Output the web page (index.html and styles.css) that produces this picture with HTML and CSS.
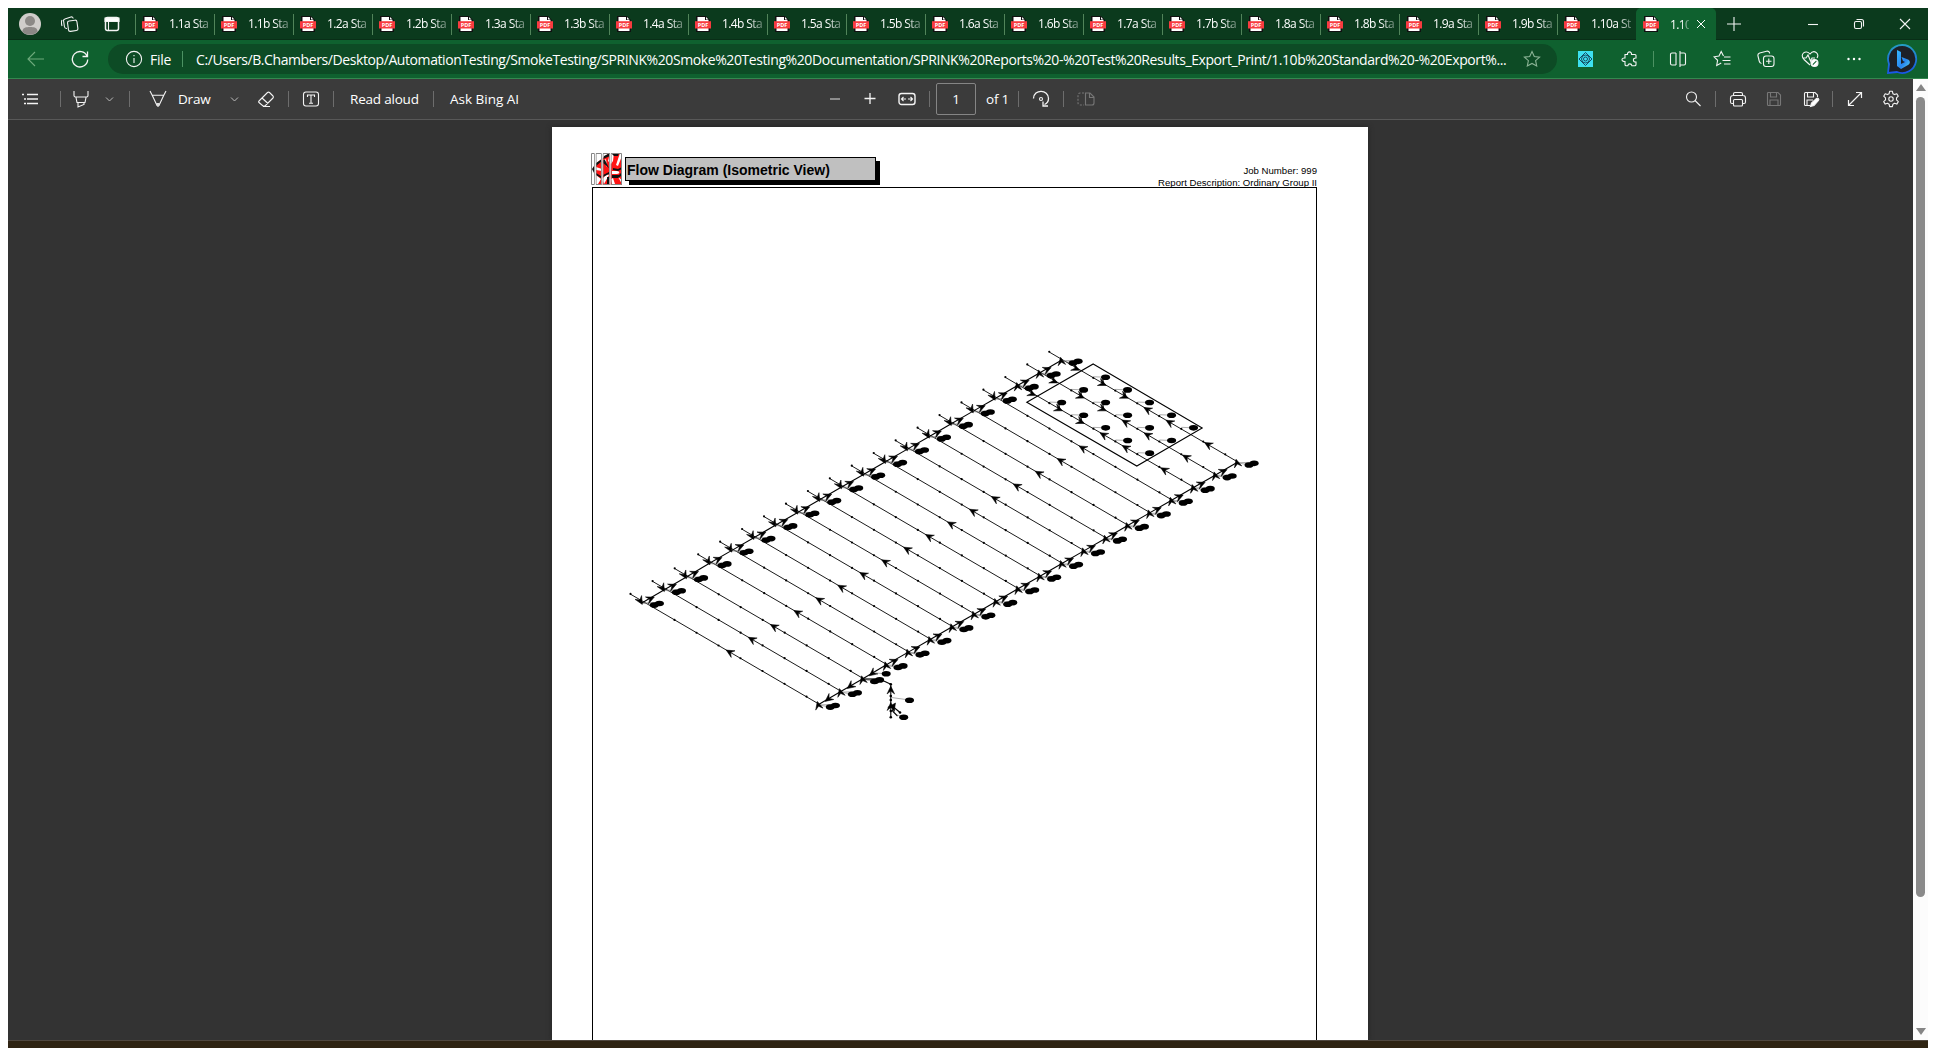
FILE: index.html
```html
<!DOCTYPE html>
<html lang="en">
<head>
<meta charset="utf-8">
<title>Flow Diagram</title>
<link rel="stylesheet" href="styles.css">
</head>
<body>
<svg width="0" height="0" class="defs">
  <symbol id="pdf" viewBox="0 0 16 16"><path d="M2 0h9l4 4v12H1V0z" fill="#111"/><path d="M2.5 1H10v3h3.5v11h-11z" fill="#fff"/><path d="M11 1l2.5 2.5H11z" fill="#fff"/><path d="M0 5.2h16v7.3H0z" fill="#f83b3f"/><text x="8" y="11" text-anchor="middle" class="pdf-text">PDF</text></symbol>
  <symbol id="chev" viewBox="0 0 9 9"><path d="M1 2.5l3.5 3.5L8 2.5"/></symbol>
</svg>
<div class="window">
  <header class="tabs">
    <div class="tab-tools">
      <svg class="avatar" viewBox="0 0 22 22"><circle cx="11" cy="11" r="11" fill="#cfccca"/><circle cx="11" cy="8" r="5" fill="#8b8886"/><path d="M3.2 18.5C4 14.500 7 14 11 14s7 .5 7.800 4.500A11 11 0 0 1 3.200 18.500z" fill="#8b8886"/></svg>
      <svg class="ic" viewBox="0 0 18 18"><rect x="7" y="5.500" width="9.500" height="10.500" rx="1.800" transform="rotate(-8 12 11)"/><path d="M6 13.500c-2 .2-2.400-.6-2.600-2L2.600 6c-.2-1 .3-1.700 1.300-2l6-2c1.300-.4 2 .2 2.300 1.500M1 11C.3 8.500.5 6 1 5"/></svg>
      <svg class="ic" viewBox="0 0 18 18"><rect x="2.500" y="2.500" width="13" height="13" rx="2" stroke-width="1.500"/><path d="M2 3h14v3.500H2z" fill="#fff"/><path d="M5.500 6v10"/></svg>
    </div>
    <div class="tab"><svg><use href="#pdf"/></svg><span>1.1a Sta</span></div>
    <div class="tab"><svg><use href="#pdf"/></svg><span>1.1b Sta</span></div>
    <div class="tab"><svg><use href="#pdf"/></svg><span>1.2a Sta</span></div>
    <div class="tab"><svg><use href="#pdf"/></svg><span>1.2b Sta</span></div>
    <div class="tab"><svg><use href="#pdf"/></svg><span>1.3a Sta</span></div>
    <div class="tab"><svg><use href="#pdf"/></svg><span>1.3b Sta</span></div>
    <div class="tab"><svg><use href="#pdf"/></svg><span>1.4a Sta</span></div>
    <div class="tab"><svg><use href="#pdf"/></svg><span>1.4b Sta</span></div>
    <div class="tab"><svg><use href="#pdf"/></svg><span>1.5a Sta</span></div>
    <div class="tab"><svg><use href="#pdf"/></svg><span>1.5b Sta</span></div>
    <div class="tab"><svg><use href="#pdf"/></svg><span>1.6a Sta</span></div>
    <div class="tab"><svg><use href="#pdf"/></svg><span>1.6b Sta</span></div>
    <div class="tab"><svg><use href="#pdf"/></svg><span>1.7a Sta</span></div>
    <div class="tab"><svg><use href="#pdf"/></svg><span>1.7b Sta</span></div>
    <div class="tab"><svg><use href="#pdf"/></svg><span>1.8a Sta</span></div>
    <div class="tab"><svg><use href="#pdf"/></svg><span>1.8b Sta</span></div>
    <div class="tab"><svg><use href="#pdf"/></svg><span>1.9a Sta</span></div>
    <div class="tab"><svg><use href="#pdf"/></svg><span>1.9b Sta</span></div>
    <div class="tab"><svg><use href="#pdf"/></svg><span>1.10a St</span></div>
    <div class="tab active"><svg><use href="#pdf"/></svg><span>1.10</span><svg class="close" viewBox="0 0 10 10"><path d="M1 1l8 8M9 1L1 9"/></svg></div>
    <svg class="ic new" viewBox="0 0 18 18"><path d="M9 2v14M2 9h14"/></svg>
    <div class="controls">
      <svg class="ic" viewBox="0 0 18 18"><path d="M4 9.500h10"/></svg>
      <svg class="ic" viewBox="0 0 18 18"><rect x="4.500" y="6.500" width="7" height="7" rx="1.500"/><path d="M6.500 4.500h5a2 2 0 0 1 2 2v5"/></svg>
      <svg class="ic" viewBox="0 0 18 18"><path d="M4 4l10 10M14 4L4 14"/></svg>
    </div>
  </header>

  <nav class="navbar">
    <svg class="ic back" viewBox="0 0 18 18"><path d="M18 9H2M9 2L2 9l7 7"/></svg>
    <svg class="ic" viewBox="0 0 18 18"><path d="M16 6A7.700 7.700 0 1 0 16.700 9.500M16.500 1.500v5h-5" stroke-width="1.300"/></svg>
    <div class="address">
      <svg class="ic" viewBox="0 0 18 18"><circle cx="9" cy="9" r="7.600"/><path d="M9 8v5M9 5v1.300"/></svg>
      <span class="file">File</span><i class="sep"></i>
      <span class="url">C:/Users/B.Chambers/Desktop/AutomationTesting/SmokeTesting/SPRINK%20Smoke%20Testing%20Documentation/SPRINK%20Reports%20-%20Test%20Results_Export_Print/1.10b%20Standard%20-%20Export%...</span>
      <svg class="ic star" viewBox="0 0 18 18"><path d="M9 1.500l2.300 5 5.300.600-4 3.600 1.100 5.300L9 13.400 4.300 16l1.100-5.300-4-3.600 5.300-.600z"/></svg>
    </div>
    <svg class="ic" viewBox="0 0 18 18"><path d="M2 1h15v16H2z" fill="#3ee0ef" stroke="none"/><g stroke="#123c55" stroke-width=".9"><path d="M9.500 2.500L16 9l-6.500 6.500L3 9z"/><circle cx="9.500" cy="9" r="4"/><circle cx="9.500" cy="9" r="2"/></g></svg>
    <svg class="ic" viewBox="0 0 18 18"><path d="M5 4.500h2.500c-.6-3.500 4.600-3.500 4 0H15c.7 0 1 .3 1 1V8c-3.500-.3-3.500 4 0 4v2.500c0 .7-.4 1.300-1.200 1.300H12c-.5-2.600-3.800-2.600-4.200 0H6.300c-.8 0-1.300-.5-1.300-1.300V11.500c-4 .3-4-4 0-3.500z"/></svg>
    <i class="sep"></i>
    <svg class="ic" viewBox="0 0 18 18"><path d="M7 3H3a1.500 1.500 0 0 0-1.500 1.500v9A1.500 1.500 0 0 0 3 15h4M11 3h4a1.500 1.500 0 0 1 1.500 1.500v9A1.500 1.500 0 0 1 15 15h-4M7 3v12M11 1v16"/></svg>
    <svg class="ic" viewBox="0 0 18 18"><path d="M10.500 6L8.200 1.500 6 6 1 6.800l3.600 3.500-.9 5.200L8.200 13M11 7h6.500M9.500 10.500h8M11 14h6.500"/></svg>
    <svg class="ic" viewBox="0 0 18 18"><rect x="6.500" y="6" width="10.500" height="10.500" rx="2.500"/><path d="M11.800 8.500v5.500M9 11.300h5.500M4.500 13.500C3 13.500 2.600 12.700 2.200 11L1 6c-.4-1.600.4-2.600 1.700-3L9.500 1.200c1.700-.4 3 .4 3.200 2.300"/></svg>
    <svg class="ic" viewBox="0 0 18 18"><path d="M9 15L3 9.500C-2 4 5-1 9 4c4-5 10-.5 7 4M1.500 8H5l2-3 2.500 6L11 8h3"/><circle cx="13.500" cy="13" r="3.500" fill="#fff"/><path d="M11.800 14.700l3.500-3.500" stroke="#0f612f"/></svg>
    <svg class="ic" viewBox="0 0 18 18"><g fill="#fff" stroke="none"><circle cx="3.500" cy="9" r="1.200"/><circle cx="9" cy="9" r="1.200"/><circle cx="14.500" cy="9" r="1.200"/></g></svg>
    <svg class="bing" viewBox="0 0 32 32"><defs><linearGradient id="ring" x2="0" y2="1"><stop stop-color="#249cc2"/><stop offset="1" stop-color="#1956e8"/></linearGradient><linearGradient id="bee" x2="1" y2="1"><stop stop-color="#36b8ff"/><stop offset=".6" stop-color="#2885ee"/><stop offset="1" stop-color="#57d8ef"/></linearGradient></defs><path d="M16 2a14 14 0 1 1-5 27l-9 1 1-9A14 14 0 0 1 16 2z" fill="#1d2026" stroke="url(#ring)" stroke-width="1.800"/><path d="M11 7l4 2v12l4-2-2-1-1.500-4 6.500 2.500c2.500 1.500 2.500 4 0 5.500l-7 4-4-3z" fill="url(#bee)"/></svg>
  </nav>

  <div class="viewer">
    <main class="reader">
      <div class="pdfbar">
        <svg class="ic" viewBox="0 0 18 18"><path d="M6 4.500h11M6 9h11M6 13.500h11M1 4.500h2M3 9h2M3 13.500h2" stroke-width="1.300"/></svg>
        <i class="sep"></i>
        <svg class="ic" viewBox="0 0 18 18"><path d="M2 1v4.500c0 1 .5 1.500 1.500 1.500h11c1 0 1.500-.5 1.500-1.500V1M4 7.500l1 5h8l1-5M6 12.500V17l6-2.500v-2"/></svg>
        <svg class="chev"><use href="#chev"/></svg>
        <i class="sep"></i>
        <svg class="ic" viewBox="0 0 18 18"><path d="M1 1l2.200 4.200h11.600L17 1M3.200 5.200L8 15.500h2l4.800-10.300"/><path d="M7 13h4l-1.500 4h-1z" fill="#ddd" stroke="none"/></svg>
        <span>Draw</span>
        <svg class="chev"><use href="#chev"/></svg>
        <svg class="ic" viewBox="0 0 18 18"><path d="M2 11l8.500-8.500a1.500 1.500 0 0 1 2 0l3.500 3.500a1.500 1.500 0 0 1 0 2L8 16H6l-4-3.500a1 1 0 0 1 0-1.500zM5 8l6 5.500M6 16.500h7"/></svg>
        <i class="sep"></i>
        <svg class="ic" viewBox="0 0 18 18"><rect x="1.500" y="2" width="15" height="14" rx="2.500"/><path d="M5.500 7V5h7v2M9 5v8M7 13.200h4"/></svg>
        <i class="sep"></i>
        <span>Read aloud</span>
        <i class="sep"></i>
        <span class="ask">Ask Bing AI</span>
        <svg class="ic" viewBox="0 0 18 18"><path d="M4 9h10" stroke="#aaa" stroke-width="1.500"/></svg>
        <svg class="ic" viewBox="0 0 18 18"><path d="M3.500 8.500h11M9 3v11" stroke-width="1.300"/></svg>
        <svg class="ic" viewBox="0 0 18 18"><rect x="1" y="3.500" width="16" height="11" rx="2.500" stroke-width="1.400"/><path d="M8 9H4M10 9h4M5.500 7L3.500 9l2 2M12.500 7l2 2-2 2"/></svg>
        <i class="sep"></i>
        <div class="page-no">1</div>
        <span>of 1</span>
        <i class="sep"></i>
        <svg class="ic" viewBox="0 0 18 18"><path d="M1.500 8.500C1.800-1.200 16.500-.8 16.500 8.500c0 3-1.600 5-4 6M11 11.500V16h5" stroke-width="1.300"/><circle cx="9" cy="9" r="1.500"/></svg>
        <i class="sep"></i>
        <svg class="ic dim" viewBox="0 0 18 18"><path d="M7 3H3a2 2 0 0 0-2 2v8a2 2 0 0 0 2 2h4" stroke-dasharray="2 1.500"/><path d="M8.500 3H13l4 4v6a2 2 0 0 1-2 2H8.500zM12.500 3v4.500H17"/></svg>
        <svg class="ic" viewBox="0 0 18 18"><circle cx="7.500" cy="7" r="5"/><path d="M11 10.500l5.500 5.500"/></svg>
        <i class="sep"></i>
        <svg class="ic" viewBox="0 0 18 18"><path d="M4.500 5.500V4c0-1 .5-1.500 1.500-1.500h6c1 0 1.500.5 1.500 1.500v1.500M4.500 13.500H3c-1 0-1.500-.5-1.500-1.500V8A2.500 2.500 0 0 1 4 5.500h10A2.500 2.500 0 0 1 16.500 8v4c0 1-.5 1.500-1.500 1.500h-1.500"/><rect x="4.500" y="9.500" width="9" height="6.500" rx="1"/></svg>
        <svg class="ic dim" viewBox="0 0 18 18"><path d="M3 2.500h10L15.500 5v9.500c0 .7-.3 1-1 1H3.500c-.7 0-1-.3-1-1V3zM5.500 3v4h6V3M5 15V10h8v5"/></svg>
        <svg class="ic" viewBox="0 0 18 18"><path d="M8 15.500H3.500c-.7 0-1-.3-1-1v-11c0-.7.300-1 1-1H13L15.500 5v2M5.500 3v4h6V3M5 15V10h6"/><path d="M8.500 16.500l1-3.500 5-4.500c1.500-1 3 .5 2 2L12 15.500z" fill="#fff"/></svg>
        <i class="sep"></i>
        <svg class="ic" viewBox="0 0 18 18"><path d="M2.500 15.500l13-13M10 2.500h5.500V8M2.500 10v5.500H8" stroke-width="1.200"/></svg>
        <svg class="ic" viewBox="0 0 18 18"><path d="M7.600 1.300h2.800l.5 2.400 1.600.9 2.300-.8 1.500 2.400-1.800 1.700v2l1.800 1.700-1.500 2.500-2.300-.8-1.600.9-.5 2.400H7.600l-.5-2.400-1.600-.9-2.300.8-1.500-2.500 1.800-1.700v-2L1.700 6.200l1.500-2.400 2.300.8 1.600-.9z" stroke-linejoin="round"/><circle cx="9" cy="9" r="2.200"/></svg>
      </div>
      <div class="canvas">
        <article class="sheet">
          <div class="sheet-head">
            <svg class="logo" viewBox="0 0 31 32">
              <path d="M5 0h26v32H5z" fill="#ff1414"/>
              <path d="M5 0h13l-5 4-5 4-3 3zM19 0h4l-1 8-2 3-3-3 1-4zM5 31v-9l5 4-3 5zM5 14l6 2v2l-6-1zM12 8l4 6-1-8zM11 26l5-5 2 1-5 9zM29 0h2v3l-4 10-2-1zM21 18h5c3 0 3 3 0 3h-5zM20 26l2-1 2 6h-3zM27 24l4 3v4z" fill="#fff"/>
              <path d="M13 3l6-3v3l-7 3zM20 0h8l-1 3h-4zM5 10l6-4v2L5 13zM12 7h2l4 8-6-5zM22 15l5 1 4-2v2l-4 2-5-1zM21 22h7l2-2v3l-3 2h-6zM12 22l6-3v2l-6 3zM5 20l5 3v2l-5-3zM16 24h2v7h-2z" fill="#111"/>
              <path d="M0 0h4v32H0z" fill="#fff"/><path d="M1 16l2-3v7z" fill="#111"/>
              <path d="M.5.500h3v31h-3zM5 .500h5.500v31H5zM12 .500h6.500v31H12zM20 .500h10.500v31H20z" fill="none" stroke="#858585"/>
              <path d="M4.250 0v32M11.250 0v32M19.250 0v32" stroke="#fff" stroke-width=".8"/>
            </svg>
            <h1>Flow Diagram (Isometric View)</h1>
            <div class="meta"><p>Job Number: 999</p><p>Report Description: Ordinary Group II</p></div>
          </div>
          <div class="frame"><svg id="diagram" viewBox="593.5 188 723 852"></svg></div>
        </article>
      </div>
    </main>
    <aside class="scrollbar"><i class="up"></i><i class="thumb"></i><i class="down"></i></aside>
  </div>
  <footer class="desktop"></footer>
</div>
<script src="diagram.js"></script>
</body>
</html>
```
FILE: styles.css
```css
* { box-sizing: border-box; }
body { margin: 0; background: #fff; font-family: "Open Sans", "Noto Sans", sans-serif; color: #fff; overflow: hidden; }
h1, p { margin: 0; }
.defs { display: block; height: 0; }
.window { width: 1920px; height: 1040px; margin: 8px 8px 0; display: flex; flex-direction: column; }
.ic { width: 18px; height: 18px; fill: none; stroke: #f4f4f4; stroke-width: 1.1; flex: none; }
.sep { width: 1px; height: 16px; background: #6d6d6d; }
.pdf-text { font: 700 5.5px "Open Sans", sans-serif; fill: #fff; }

.tabs { height: 32px; flex: none; display: flex; background: #0b3a1d; border-bottom: 1px solid #092e17; }
.tab-tools { width: 127px; flex: none; display: flex; align-items: center; padding-left: 11px; }
.avatar { width: 22px; height: 22px; margin-right: 20px; }
.tab-tools .ic + .ic { margin-left: 24px; }
.tab { position: relative; width: 79px; flex: none; display: flex; align-items: center; padding-left: 7px; }
.tab:not(.active)::before { content: ""; position: absolute; left: 0; top: 6px; width: 1px; height: 21px; background: #51845a; }
.tab svg { width: 16px; height: 16px; flex: none; }
.tab span { margin-left: 11px; width: 43px; white-space: nowrap; font-size: 12px; letter-spacing: -.6px; -webkit-mask-image: linear-gradient(90deg, #000 60%, rgba(0,0,0,.25) 100%); mask-image: linear-gradient(90deg, #000 60%, rgba(0,0,0,.25) 100%); }
.tab.active { width: 80px; height: 32px; background: #0f612f; border-radius: 5px 5px 0 0; }
.tab.active span { width: 19px; }
.tab.active .close { width: 10px; height: 10px; margin-left: 7px; fill: none; stroke: #fff; }
.new { align-self: center; margin-left: 9px; }
.controls { display: flex; align-items: center; gap: 28px; margin-left: 61px; }

.navbar { height: 39px; flex: none; display: grid; grid-template-columns: 45px 37px 1468px 44px 33px 16px 44px 44px 44px 44px 41px 32px; align-items: center; padding-left: 18px; background: #0f612f; border-bottom: 1px solid #34884f; }
.navbar .sep, .address .sep { background: #4c9263; }
.back { stroke: #6faa7d; }
.address { display: flex; align-items: center; width: 1449px; height: 30px; border-radius: 15px; background: #0d4b25; padding-left: 17px; }
.file { margin-left: 7px; width: 32px; font-size: 14px; letter-spacing: -.3px; }
.url { margin-left: 13px; width: 1320px; flex: none; font-size: 14px; letter-spacing: -.41px; white-space: nowrap; }
.star { margin-left: 7px; stroke: #8bb395; }
.bing { width: 32px; height: 32px; }

.viewer { flex: 1; min-height: 0; display: flex; }
.reader { width: 1905px; display: flex; flex-direction: column; }
.pdfbar { height: 41px; flex: none; display: grid; align-items: center; padding-left: 13px; background: #3b3b3b; border-bottom: 1px solid #585858; font-size: 13.5px; white-space: nowrap;
  grid-template-columns: 39px 12px 33px 24px 20px 29px 52px 27px 31px 14px 31px 17px 83px 17px 376px 35px 37px 31px 7px 50px 32px 14px 31px 14px 607px 31px 14px 36px 37px 30px 14px 36px 18px; }
.pdfbar span { letter-spacing: -.2px; }
.pdfbar .ask { letter-spacing: 0; }
.chev { width: 9px; height: 9px; fill: none; stroke: #bbb; }
.dim { stroke: #777; }
.page-no { width: 40px; height: 32px; border: 1px solid #858585; border-radius: 2px; text-align: center; line-height: 31px; }
.canvas { flex: 1; min-height: 0; background: #333; padding: 7px 0 0 544px; }
.sheet { width: 816px; height: 100%; background: #fff; color: #000; padding: 26px 51px 0 39px; font-family: "Liberation Sans", Arial, sans-serif; display: flex; flex-direction: column; box-shadow: 0 0 5px #222; }
.sheet-head { height: 34px; flex: none; display: flex; }
.logo { width: 31px; height: 32px; }
.sheet h1 { width: 251px; height: 24px; margin: 4px 0 0 3px; border: 1px solid #000; background: #c0c0c0; box-shadow: 4px 4px 0 #000; font-size: 14px; line-height: 24px; padding-left: 1px; white-space: nowrap; }
.meta { margin-left: auto; padding-top: 12px; font-size: 9.6px; line-height: 12px; text-align: right; }
.frame { flex: 1; min-height: 0; width: 725px; margin-left: 1px; border: 1px solid #000; border-bottom: 0; }
.frame svg { display: block; width: 723px; height: 852px; }
.scrollbar { width: 15px; display: flex; flex-direction: column; align-items: center; background: #fcfcfc; padding: 5px 0; }
.up { border: 5px solid transparent; border-top: 0; border-bottom: 7px solid #858585; }
.down { margin-top: auto; border: 5px solid transparent; border-bottom: 0; border-top: 7px solid #858585; }
.thumb { width: 9px; height: 800px; margin-top: 6px; border-radius: 5px; background: #8a8a8a; }
.desktop { height: 8px; flex: none; background: #2f2413; border-top: 1px solid #504840; }

.lateral { stroke: #000; stroke-width: .9; }
.main { stroke: #000; stroke-width: 1.1; }
.branch { stroke: #777; stroke-width: .6; }
.area { fill: none; stroke: #000; stroke-width: 1.1; }
.head { stroke: #000; stroke-width: .5; }
```
FILE: diagram.js
```js
const svg = document.getElementById("diagram");
const NS = "http://www.w3.org/2000/svg";
const SLOPE = 30;

function add(tag, attrs) {
  const el = document.createElementNS(NS, tag);
  for (const key in attrs) el.setAttribute(key, attrs[key]);
  svg.appendChild(el);
}
const line = (x1, y1, x2, y2, cls) => add("line", { x1, y1, x2, y2, class: cls });
const dot = (x, y, r = 0.9) => add("circle", { cx: x, cy: y, r });
const blob = (x, y) => add("ellipse", { cx: x, cy: y, rx: 4.5, ry: 2.8 });
// Arrowhead with its tip at x, y, turned clockwise from pointing right.
const arrow = (x, y, angle) => add("path", {
  d: "M0 0L-8 -3.8L-5 0L-8 3.8Z",
  transform: `translate(${x} ${y}) rotate(${angle})`,
  class: "head"
});

const upper = i => i < 3
  ? [642.3 + 22.1 * i, 602.9 - 12.8 * i]
  : [710 + 21.94 * (i - 3), 563.3 - 12.66 * (i - 3)];
const lower = i => upper(i).map((v, k) => v + [176, 102][k]);

function pair(x, y) {
  line(x, y, x + 12, y + 2, "branch");
  line(x, y, x + 18, y - 0.5, "branch");
  blob(x + 12.5, y + 2.2);
  blob(x + 17.6, y + 0.6);
}

for (let i = 0; i < 20; i++) {
  const [x, y] = upper(i);
  const [lx, ly] = lower(i);
  line(x - 11.3, y - 8.7, lx, ly - 1.5, "lateral");
  dot(x - 11.3, y - 9, 1.1);
  for (let n = 1; n < 8; n++) {
    const dx = 10.7 + 22 * n;
    dot(x + dx, y - 1.9 + 0.58 * dx, 1.1);
  }
  pair(x, y);
  pair(lx, ly);
  if (i < 17) {
    arrow(x + 0.5, y + 1.5, 60);
    arrow(x + 84.4, y + 47.2, 180 + SLOPE);
  } else {
    arrow(x, y - 3.5, -100);
    for (const [dx, dy] of [[19, 9.5], [45.7, 24.7], [67.7, 37.4]]) arrow(x + dx, y + dy, 25);
    for (const [dx, dy] of [[83.3, 46.7], [105.5, 59.5], [144, 81.7]]) arrow(x + dx, y + dy, 180 + SLOPE);
    for (let n = 0; n < 5; n++) {
      const bx = x + 45 + 22 * n, by = y + 16.5 + 12.65 * n;
      line(bx - 12, by - 0.5, bx, by, "branch");
      if (n < 2) line(bx - 3, by, bx - 2, by + 7, "main");
      blob(bx, by);
    }
  }
  arrow(lx - 0.5, ly - 3.5, -105);
  if (i < 19) {
    const [nx, ny] = upper(i + 1);
    const [mx, my] = lower(i + 1);
    line(x, y, nx, ny, "main");
    line(lx, ly, mx, my, "main");
    arrow(x + 12.5, y - 5.8, -SLOPE + 6);
    if (i < 3) arrow(lx + 7.3, ly - 3.5, 180 - SLOPE - 8);
    else arrow(lx + 12.5, ly - 5.8, -SLOPE + 6);
  }
}

add("polygon", { points: "1093.7,364 1202.7,428 1137.3,466 1027.3,402.3", class: "area" });

// Riser that feeds the lower main.
line(862, 679, 880, 679, "main");
line(880, 679, 891.3, 684.3, "main");
line(891.3, 684.3, 891.3, 717.3, "main");
line(876, 673, 886, 673.7, "branch");
blob(886.7, 673.7);
for (const y of [684.3, 696, 700, 711, 717.3]) dot(891.3, y, 1.3);
arrow(891.3, 686, -90);
arrow(891.3, 702.5, -90);
arrow(896, 703, -55);
line(892, 697.5, 910, 700, "branch");
blob(910, 700.3);
line(891.3, 705, 900, 712, "main");
line(894, 705, 893, 711, "main");
line(893, 711, 898, 716, "main");
dot(900.5, 712.5, 1.3);
line(898, 715, 904, 717, "branch");
blob(904.2, 717.3);
```
